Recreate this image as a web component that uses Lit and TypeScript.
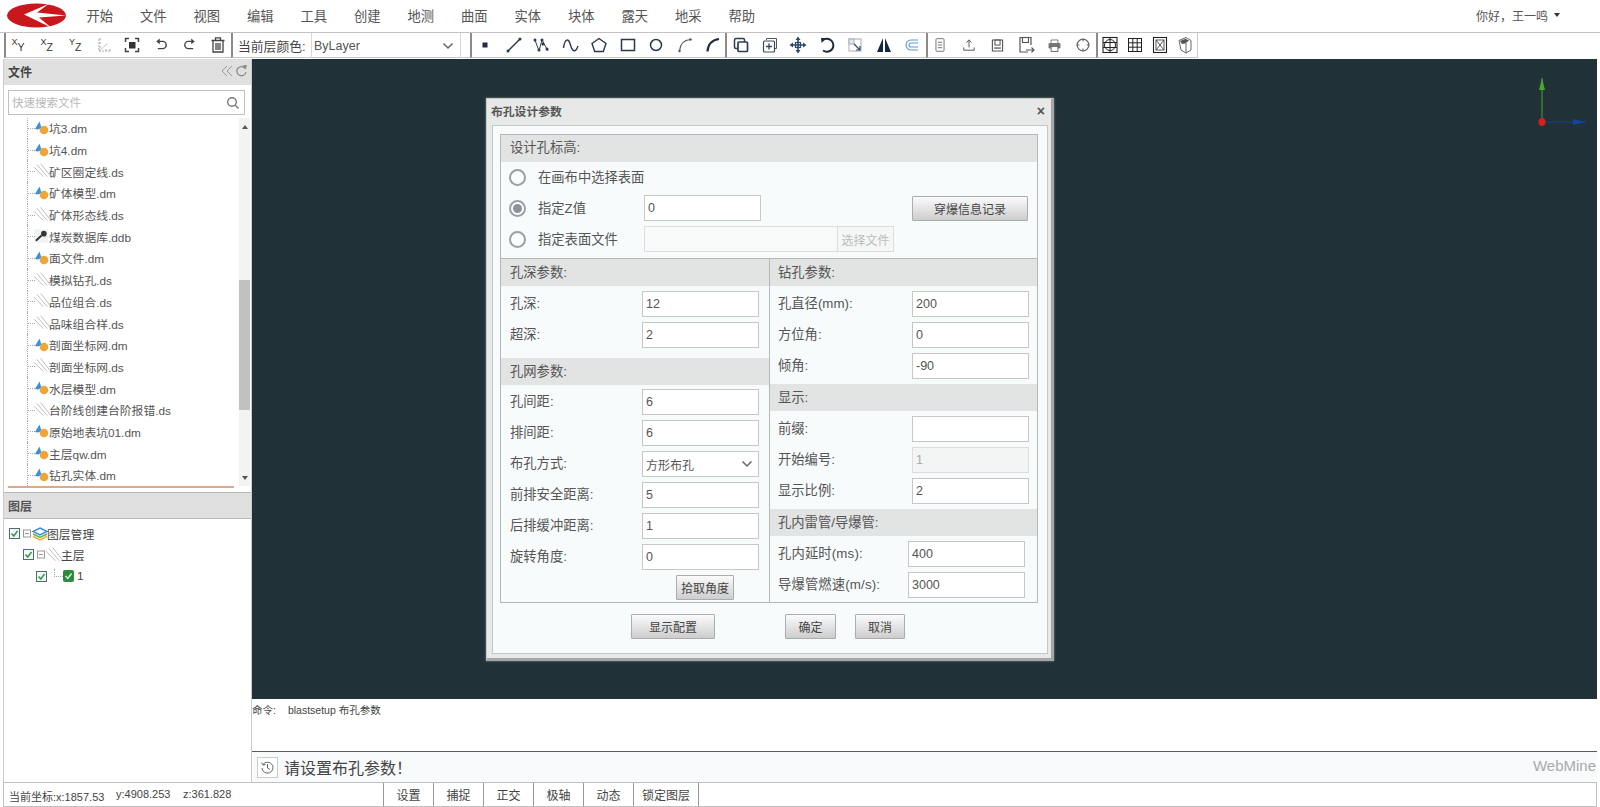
import { LitElement, html, svg, css } from "lit";
import { customElement } from "lit/decorators.js";

const ic = (body: any, size = 20) => html`<svg width=${size} height=${size} viewBox="0 0 20 20" fill="none" stroke="#444" stroke-width="1.4">${body}</svg>`;
const sx = (a: string, b: string) => html`<span class="axis"><span>${a}</span><span class="low">${b}</span></span>`;

const group1 = [
  sx("X", "Y"), sx("X", "Z"), sx("Y", "Z"),
  ic(svg`<path d="M5 4v12h11M5 16l9-8M5 4h2M5 8h2M5 12h2M16 14v3M12 14v3" stroke="#aaa" stroke-width="1" stroke-dasharray="2 1"/>`),
  ic(svg`<rect x="7" y="7" width="6.5" height="6.5" fill="#333" stroke="none"/><path d="M3.5 7V3.5H7M13 3.5h3.5V7M16.5 13v3.5H13M7 16.5H3.5V13" stroke-width="1.5"/>`),
  ic(svg`<path d="M8 5.5H12a4 4 0 0 1 0 9H6" stroke-width="1.8"/><path d="M8.5 1.8 4 5.5l4.5 3.7" fill="#444" stroke="none"/>`, 16),
  ic(svg`<path d="M12 5.5H8a4 4 0 0 0 0 9h6" stroke-width="1.8"/><path d="M11.5 1.8 16 5.5l-4.500 3.700" fill="#444" stroke="none"/>`, 16),
  ic(svg`<path d="M3.5 5.5h13M7.5 5V2.8h5V5M5 6v11h10V6M8 8v7M10 8v7M12 8v7" stroke-width="1.3"/>`),
];
const dot = (x: number, y: number) => svg`<circle cx=${x} cy=${y} r="1.5" fill="#2b3a4a" stroke="none"/>`;
const group2 = [
  ic(svg`<rect x="7.5" y="7.5" width="5" height="5" fill="#1f2d3d" stroke="none"/>`),
  ic(svg`<path d="M4 16 16 4" stroke="#2b3a4a"/>${dot(4, 16)}${dot(16, 4)}`),
  ic(svg`<path d="M3 5l4 11 3-11 6 11" stroke="#2b3a4a" stroke-width="1"/>${dot(3, 5)}${dot(7, 15)}${dot(10, 5)}${dot(11, 9)}${dot(15, 14)}`),
  ic(svg`<path d="M2.5 13C4 3 7.500 3 9.5 10s5 8 7.500 1" stroke="#2b3a4a"/>`),
  ic(svg`<path d="M10 3.500 17 8.500 14.300 16.500H5.700L3 8.500Z" stroke="#2b3a4a"/>`),
  ic(svg`<rect x="3.5" y="4.5" width="13" height="11" stroke="#2b3a4a" stroke-width="1.5"/>`),
  ic(svg`<circle cx="10" cy="10" r="5.5" stroke="#2b3a4a" stroke-width="1.5"/>`),
  ic(svg`<path d="M4.500 16C5 9 9 5 15.500 4.500" stroke="#555" stroke-width="1.1"/><circle cx="4.5" cy="16" r="1.2" fill="#555" stroke="none"/><circle cx="15.5" cy="4.5" r="1.2" fill="#555" stroke="none"/>`),
  ic(svg`<path d="M4.500 16.500C5 9 9 5 16 4" stroke="#1f2d3d" stroke-width="2.2"/>`),
];
const group3 = [
  ic(svg`<rect x="3.5" y="3.5" width="10" height="10" rx="1.5" stroke="#2a3f55" stroke-width="1.5"/><rect x="7" y="7" width="9.5" height="9.5" rx="1" fill="#fff" stroke="#2a3f55" stroke-width="1.7"/>`),
  ic(svg`<path d="M6.500 5V3.500h10v10H15" stroke="#555" stroke-width="1"/><rect x="3.5" y="6" width="11" height="11" rx="1" stroke="#3b4a5a" stroke-width="1.2"/><path d="M9 8.500v6M6 11.500h6" stroke="#3b4a5a"/>`),
  ic(svg`<path d="M10 3v14M3 10h14" stroke="#2a4a68" stroke-width="1.6"/><path d="M10 1.500 12.500 5h-5ZM10 18.500 7.500 15h5ZM1.500 10 5 7.500v5ZM18.500 10 15 12.500v-5Z" fill="#2a4a68" stroke="none"/><rect x="7.5" y="7.5" width="5" height="5" stroke="#2a4a68" stroke-width="1.2"/>`),
  ic(svg`<path d="M5.500 5.500A6.500 6.500 0 1 1 6 15.500" stroke="#1f2d3d" stroke-width="2"/><path d="M4 3h5.500L4.500 8Z" fill="#1f2d3d" stroke="none"/>`),
  ic(svg`<rect x="4" y="4" width="12" height="12" stroke="#aab" stroke-width="1"/><rect x="4" y="4" width="5" height="5" fill="#e4e6ee" stroke="#aab" stroke-width="1"/><path d="M9 9l6 6M15 11v4h-4" stroke="#2a4a68" stroke-width="1.2"/>`),
  ic(svg`<path d="M9 3 3 17h6ZM11 3 17 17h-6Z" fill="#13293f" stroke="none"/>`),
  ic(svg`<path d="M16 5H9a5 5 0 0 0 0 10h7M16 8H9a2 2 0 0 0 0 4h7" stroke="#5b9bd0" stroke-width="1.1"/>`),
];
const group4 = [
  ic(svg`<rect x="5.5" y="3" width="9" height="14" rx="1" stroke="#777" stroke-width="1.1"/><path d="M7.500 7h5M7.500 10h5M7.500 13h5" stroke="#777" stroke-width="1.1"/>`, 18),
  ic(svg`<path d="M10 13V4M7 7l3-3.500L13 7M3.500 13v3.500h13V13" stroke="#555" stroke-width="1.2"/>`, 16),
  ic(svg`<path d="M4 3.500h12V16.500H4Z" stroke="#555" stroke-width="1.3"/><rect x="7" y="3.5" width="6" height="6" stroke="#555" stroke-width="1.2"/><path d="M6 13h8" stroke="#555" stroke-width="1.5"/>`, 17),
  ic(svg`<path d="M15 10V2.500H4V17h8" stroke="#555" stroke-width="1.2"/><rect x="6.5" y="2.5" width="6" height="5" stroke="#555" stroke-width="1.1"/><path d="M10 15h8M15.500 12.500 18 15l-2.500 2.500" stroke="#555" stroke-width="1.1"/>`),
  ic(svg`<path d="M6 7V3.500h8V7" stroke="#777" stroke-width="1.1"/><rect x="3" y="7" width="14" height="6.5" rx="1.5" fill="#777" stroke="none"/><rect x="6" y="11" width="8" height="6" fill="#fff" stroke="#666" stroke-width="1.1"/>`, 17),
  ic(svg`<circle cx="10" cy="10" r="6.5" stroke="#666" stroke-width="1.4"/><path d="M10 3v3M10 14v3M3 10h3M14 10h3" stroke="#666" stroke-width="1.2"/>`, 18),
];
const group5 = [
  ic(svg`<rect x="3" y="2.5" width="14" height="15" stroke="#222" stroke-width="1.1"/><circle cx="10" cy="10" r="5.5" stroke="#222" stroke-width="1"/><path d="M3 7.500h14M3 12.500h14M10 2.500v15" stroke="#222" stroke-width="1"/>`),
  ic(svg`<rect x="3.5" y="3.5" width="13" height="13" stroke="#222" stroke-width="1"/><path d="M3.500 7.800h13M3.500 12.200h13M7.800 3.500v13M12.200 3.500v13" stroke="#222" stroke-width="1"/>`),
  ic(svg`<rect x="3.5" y="2.5" width="13" height="15" stroke="#222" stroke-width="1.1"/><rect x="6" y="5" width="8" height="10" stroke="#555" stroke-width="1"/><path d="M6 5l8 10M14 5 6 15" stroke="#555" stroke-width="1"/>`),
  ic(svg`<path d="M4 5.500 11 2.500l5 3V15l-5 3-5-3ZM11 8V18" stroke="#666" stroke-width="1"/><path d="M5 6 10.500 3.800 14 5.700 10 8.500 7 9Z" fill="#555" stroke="none"/>`),
];

const iconFile = html`<span class="fw"><svg width="16" height="16" viewBox="0 0 16 16"><path d="M1 9 5.500 1.500 7.500 8 4 9.500Z" fill="#3d8fd6"/><circle cx="10" cy="10" r="4.3" fill="#eea53a"/></svg></span>`;
const iconLines = html`<span class="fw"><svg width="17" height="16" viewBox="0 0 18 16" fill="none" stroke="#bbb" stroke-width="1"><path d="M0 4 10 14M3 1 14 14M7 0 18 14"/></svg></span>`;
const iconKey = html`<span class="fw"><svg width="15" height="16" viewBox="0 0 16 16"><rect x="0" y="1" width="15" height="14" fill="#f0f2f3"/><path d="M2 13 8 7.500" stroke="#333" stroke-width="2"/><circle cx="10.5" cy="5.5" r="3" fill="#333"/></svg></span>`;

type F = [string, "dm" | "ds" | "key"];
const files: F[] = [
  ["坑3.dm", "dm"], ["坑4.dm", "dm"], ["矿区圈定线.ds", "ds"], ["矿体模型.dm", "dm"], ["矿体形态线.ds", "ds"],
  ["煤炭数据库.ddb", "key"], ["面文件.dm", "dm"], ["模拟钻孔.ds", "ds"], ["品位组合.ds", "ds"], ["品味组合样.ds", "ds"],
  ["剖面坐标网.dm", "dm"], ["剖面坐标网.ds", "ds"], ["水层模型.dm", "dm"], ["台阶线创建台阶报错.ds", "ds"],
  ["原始地表坑01.dm", "dm"], ["主层qw.dm", "dm"], ["钻孔实体.dm", "dm"],
];
const menus = ["开始", "文件", "视图", "编辑", "工具", "创建", "地测", "曲面", "实体", "块体", "露天", "地采", "帮助"];
const chevron = html`<svg width="12" height="8" viewBox="0 0 12 8" fill="none" stroke="#666" stroke-width="1.5"><path d="M1.500 1.500 6 6l4.500-4.500"/></svg>`;
const check = html`<svg class="chk" width="11" height="11" viewBox="0 0 11 11" fill="#fff" stroke="#4f6b7a"><rect x=".5" y=".5" width="10" height="10" fill="#f4f8fa"/><path d="M2.500 5.500 4.800 8 8.500 3" stroke="#2f9a45" stroke-width="1.5" fill="none"/></svg>`;
const expander = html`<svg class="exp" width="8" height="9" viewBox="0 0 8 9" fill="none" stroke="#999"><rect x=".5" y="1" width="7" height="7"/><path d="M2 4.500h4"/></svg>`;

@customElement("app-root")
export class AppRoot extends LitElement {
  static styles = css`
    :host { display: block; width: 1600px; height: 807px; overflow: hidden; background: #fff;
      font-family: "Liberation Sans", "Noto Sans CJK SC", sans-serif; color: #555; font-size: 13px; }
    * { box-sizing: border-box; }
    .root { display: flex; flex-direction: column; height: 807px; }

    .menubar { height: 33px; flex: none; display: flex; align-items: center; padding: 0 0 2px 7px; border-bottom: 1px solid #c2c2c2; }
    .logo { flex: none; width: 59px; height: 25px; margin-right: 7px; }
    .menu { flex: none; width: 53.5px; text-align: center; font-size: 13.3px; color: #555; }
    .user { margin-left: auto; margin-right: 40px; font-size: 12px; color: #555; display: flex; align-items: center; gap: 6px; }
    .caret { width: 0; height: 0; border: 3.5px solid transparent; border-top: 4px solid #333; border-bottom: 0; }

    .toolbar { height: 26px; flex: none; display: flex; padding-left: 4px; }
    .tgroup { display: flex; align-items: center; height: 25px; border-left: 2px solid #8b8b8b; border-bottom: 1px solid #c8c8c8; }
    .g1 { gap: 4.6px; width: 227px; }
    .g2 { width: 239px; padding-left: 5px; }
    .g3 { gap: 4.5px; width: 255px; padding-left: 1px; }
    .g4 { gap: 4.5px; width: 201px; padding-left: 2px; }
    .g5 { gap: 4.5px; width: 170px; }
    .g6 { gap: 1px; width: 102px; border-right: 1px solid #c8c8c8; }
    .tb { flex: none; width: 24px; height: 24px; display: flex; align-items: center; justify-content: center; }
    .axis { display: flex; font-size: 9px; color: #333; line-height: 1; transform: translateY(-2px); }
    .axis .low { font-size: 10.5px; transform: translateY(4px); }
    .lab { flex: none; font-size: 12.8px; color: #444; width: 73px; }
    .sel { width: 150px; height: 25px; flex: none; border: 1px solid #d8d8d8; border-width: 0 1px; display: flex; align-items: center;
      justify-content: space-between; padding: 1px 6px 0 2px; font-size: 12.5px; color: #555; }

    .main { flex: 1; min-height: 0; display: flex; }
    .side { flex: none; width: 249px; margin-left: 3px; border-left: 1px solid #ccc; border-right: 1px solid #ccc; display: flex; flex-direction: column; }
    .shead { flex: none; height: 26px; background: #e0e0e0; display: flex; align-items: center; padding: 0 3px 2px 4px; font-size: 12px; font-weight: bold; color: #444; }
    .shead .acts { margin-left: auto; display: flex; align-items: center; gap: 1px; }
    .searchwrap { flex: none; height: 33px; padding: 5px 6px 0 4px; }
    .search { height: 25px; border: 1px solid #c0c0c0; display: flex; align-items: center; justify-content: space-between; padding: 0 4px 0 3px; font-size: 11.5px; color: #b8b8b8; }
    .search span { transform: translateY(-1.5px); }
    .files { flex: none; height: 368px; display: flex; overflow: hidden; }
    .tree { flex: 1; padding-left: 23px; margin-top: -1px; }
    .row { height: 21.7px; display: flex; align-items: center; position: relative; border-left: 1px dotted #aaa; padding-left: 6px; font-size: 11.8px; color: #555; white-space: nowrap; }
    .row::before { content: ""; position: absolute; left: 0; top: 50%; width: 7px; border-top: 1px dotted #aaa; }
    .fw { flex: none; width: 15px; display: flex; }
    .fw svg { flex: none; overflow: visible; }
    .scroll { flex: none; width: 11px; margin-right: 1px; background: #f3f3f3; display: flex; flex-direction: column; align-items: stretch; }
    .sarrow { flex: none; height: 17px; display: flex; align-items: center; justify-content: center; }
    .up { width: 0; height: 0; border: 3.5px solid transparent; border-bottom: 4px solid #555; border-top: 0; }
    .down { width: 0; height: 0; border: 3.5px solid transparent; border-top: 4px solid #555; border-bottom: 0; }
    .thumbgap { flex: none; height: 145px; }
    .rest { flex: 1; }
    .thumb { flex: none; height: 130px; background: #c1c1c1; }
    .rule { flex: none; height: 2px; background: #dcaa84; margin: 0 17px 0 4px; }
    .lhead { flex: none; height: 27px; margin-top: 4px; border-top: 1px solid #b9b9b9; border-bottom: 1px solid #b9b9b9; background: #e0e0e0; display: flex; align-items: center; padding-left: 4px; font-size: 12px; color: #555; font-weight: bold; }
    .ltree { flex: 1; padding-top: 4px; }
    .lrow { height: 21.3px; display: flex; align-items: center; font-size: 11.8px; color: #444; }
    .l0 { padding-left: 5px; } .l1 { padding-left: 19px; } .l2 { padding-left: 32px; }
    .chk { flex: none; margin-right: 3px; }
    .exp { flex: none; margin-right: 1px; }
    .dash { flex: none; width: 9px; height: 8px; margin: 0 0 6px 4px; border-left: 1px dotted #aaa; border-bottom: 1px dotted #aaa; }
    .greenbox { flex: none; width: 11px; height: 12px; margin-right: 3px; }

    .work { flex: 1; min-width: 0; display: flex; flex-direction: column; padding-right: 3px; }
    .canvas { flex: none; height: 640px; background: #203237; position: relative; }
    .gizmo { position: absolute; right: 10px; top: 14px; }
    .cmd { flex: none; height: 53px; border-bottom: 1px solid #5c5c5c; padding-top: 5px; font-size: 10.5px; color: #444; display: flex; gap: 12px; line-height: 13px; }
    .prompt { flex: 1; background: #f8fafb; display: flex; align-items: center; padding: 0 1px 0 5px; font-size: 16px; color: #444; }
    .hist { flex: none; width: 21px; height: 21px; border: 1px solid #ccc; background: #fff; display: flex; align-items: center; justify-content: center; margin-right: 6px; }
    .brand { margin-left: auto; font-size: 15px; color: #aaa; margin-top: -3px; }

    .status { flex: none; height: 25px; margin: 0 3px; border: 1px solid #c0c0c0; display: flex; align-items: center; font-size: 12px; color: #444; padding-left: 5px; }
    .coords { flex: none; width: 374px; display: flex; font-size: 11px; padding-top: 2px; }
    .c1 { width: 107px; } .c2 { width: 67px; }
    .sbtn { flex: none; width: 50px; height: 100%; border-left: 1px solid #999; display: flex; align-items: center; justify-content: center; }
    .sbtn.wide { width: 66px; border-right: 1px solid #999; }

    .dlg { position: absolute; left: 234px; top: 39px; width: 568px; height: 563px; background: #e7e8e8; border: 1px solid #c8c8c8; border-right: 3px solid #a6a6a6; border-bottom: 3px solid #a6a6a6; display: flex; flex-direction: column; padding: 0 3px 4px 5px; box-shadow: 0 0 2px #8a8a8a; }
    .dtitle { flex: none; height: 26px; display: flex; align-items: center; justify-content: space-between; padding: 0 3px 3px 0; margin-left: -1px; font-size: 11.8px; font-weight: bold; color: #555; }
    .x { font-size: 14px; color: #555; font-weight: bold; line-height: 1; }
    .dbody { flex: 1; background: #f8fbfc; border: 1px solid #c4c7c8; padding: 8px 9px 0 7px; display: flex; flex-direction: column; }
    .fs { flex: none; height: 469px; border: 1px solid #b6b8b8; display: flex; flex-direction: column; }
    .hd { flex: none; height: 27px; background: #e2e3e3; display: flex; align-items: center; padding: 0 0 2px 9px; font-size: 13.3px; color: #555; }
    .fs > .hd { padding-bottom: 4px; }
    .top { flex: none; height: 97px; border-bottom: 1px solid #b6b8b8; padding-top: 2px; }
    .trow { height: 26px; margin-bottom: 5px; display: flex; align-items: center; padding-left: 8px; font-size: 13.3px; color: #555; }
    .radio { flex: none; width: 17px; height: 17px; border-radius: 50%; border: 2px solid #9aa0a3; background: #fcfdfd; margin-right: 12px; display: flex; align-items: center; justify-content: center; }
    .radio.on::after { content: ""; width: 9px; height: 9px; border-radius: 50%; background: #8e929c; }
    .tl { transform: translateY(-1.5px); }
    .tlabel { flex: none; width: 106px; transform: translateY(-1.5px); }
    .in { display: flex; align-items: center; flex: none; width: 117px; height: 26px; border: 1px solid #c6c8c8; background: #fff; font: 12.5px "Liberation Sans", "Noto Sans CJK SC", sans-serif; color: #555; padding: 0 3px; }
    .in.off { background: #f3f5f5; border-color: #dcdede; color: #aaa; }
    .in.dd { justify-content: space-between; padding-right: 5px; font-size: 12px; }
    .btn { flex: none; display: flex; align-items: center; justify-content: center; height: 25px; border: 1px solid #a9adad; background: linear-gradient(#fbfbfb, #cdcdcd); font-size: 12px; color: #444; border-radius: 1px; }
    .btn.big { width: 116px; margin-left: 151px; }
    .file { flex: none; width: 250px; height: 26px; border: 1px solid #dcdede; display: flex; justify-content: flex-end; background: #f8fafa; }
    .filebtn { width: 56px; border-left: 1px solid #dcdede; display: flex; align-items: center; justify-content: center; font-size: 12px; color: #bbb; background: #f5f6f6; }
    .cols { flex: 1; display: flex; min-height: 0; }
    .col { display: flex; flex-direction: column; }
    .left { flex: none; width: 269px; border-right: 1px solid #b6b8b8; }
    .right { flex: 1; }
    .right .hd { padding-left: 8px; }
    .sec { display: flex; flex-direction: column; gap: 5px; padding-left: 9px; }
    .right .sec { padding-left: 8px; }
    .s1 { padding-top: 5px; height: 72px; }
    .s2 { padding-top: 4px; }
    .r1 { padding-top: 5px; height: 98px; }
    .r2 { padding-top: 5px; height: 98px; }
    .r3 { padding-top: 5px; }
    .f { height: 26px; display: flex; align-items: center; font-size: 13.3px; color: #555; }
    .fl { flex: none; width: 134px; transform: translateY(-2px); white-space: nowrap; }
    .left .fl { width: 132px; }
    .r3 .fl { width: 130px; letter-spacing: 0.15px; }
    .pick { width: 58px; margin-left: 166px; }
    .foot { flex: 1; display: flex; padding-top: 11px; }
    .foot .b1 { width: 84px; margin-left: 131px; }
    .foot .b2 { width: 51px; margin-left: 70px; }
    .foot .b3 { width: 50px; margin-left: 19px; }
  `;

  field(label: string, value = "", off = false) {
    return html`<div class="f"><span class="fl">${label}</span><div class="in ${off ? "off" : ""}">${value}</div></div>`;
  }

  render() {
    const fileIcon = (k: string) => (k === "dm" ? iconFile : k === "ds" ? iconLines : iconKey);
    return html`<div class="root">
      <div class="menubar">
        <svg class="logo" viewBox="0 0 59 25"><ellipse cx="29.5" cy="12.5" rx="29.5" ry="12" fill="#c8171d"/><path d="M17 11.500 42 .8 30 9.500 59 12.500 32 14.500 44 24.500Z" fill="#fff"/></svg>
        ${menus.map((m) => html`<div class="menu">${m}</div>`)}
        <div class="user"><span>你好，王一鸣</span><span class="caret"></span></div>
      </div>
      <div class="toolbar">
        <div class="tgroup g1">${group1.map((i) => html`<div class="tb">${i}</div>`)}</div>
        <div class="tgroup g2"><span class="lab">当前层颜色:</span><div class="sel"><span>ByLayer</span>${chevron}</div></div>
        <div class="tgroup g3">${group2.map((i) => html`<div class="tb">${i}</div>`)}</div>
        <div class="tgroup g4">${group3.map((i) => html`<div class="tb">${i}</div>`)}</div>
        <div class="tgroup g5">${group4.map((i) => html`<div class="tb">${i}</div>`)}</div>
        <div class="tgroup g6">${group5.map((i) => html`<div class="tb">${i}</div>`)}</div>
      </div>
      <div class="main">
        <div class="side">
          <div class="shead"><span>文件</span><div class="acts">
            <svg width="14" height="14" viewBox="0 0 14 14" fill="none" stroke="#999" stroke-width="1"><path d="M7 2 2 7l5 5M12 2 7 7l5 5"/></svg>
            <svg width="13" height="14" viewBox="0 0 13 14" fill="none" stroke="#888" stroke-width="1.2"><path d="M10.500 5A4.600 4.600 0 1 0 11 8"/><path d="M7.500 1.500 11 5l1-4Z" fill="#888" stroke="none"/></svg>
          </div></div>
          <div class="searchwrap"><div class="search"><span>快速搜索文件</span>
            <svg width="14" height="14" viewBox="0 0 14 14" fill="none" stroke="#777" stroke-width="1.4"><circle cx="6" cy="6" r="4.3"/><path d="M9.200 9.200 12.500 12.500"/></svg></div></div>
          <div class="files">
            <div class="tree">${files.map(([n, k]) => html`<div class="row">${fileIcon(k)}<span>${n}</span></div>`)}</div>
            <div class="scroll">
              <div class="sarrow"><span class="up"></span></div>
              <div class="thumbgap"></div><div class="thumb"></div>
              <div class="rest"></div>
              <div class="sarrow"><span class="down"></span></div>
            </div>
          </div>
          <div class="rule"></div>
          <div class="lhead">图层</div>
          <div class="ltree">
            <div class="lrow l0">${check}${expander}
              <span class="fw"><svg width="16" height="16" viewBox="0 0 16 16" fill="none"><path d="M1 10.500 8 14l7-3.500" stroke="#e0b23a" stroke-width="1.5"/><path d="M1 8 8 11.500 15 8" stroke="#64b04a" stroke-width="1.5"/><path d="M8 2 15 5.500 8 9 1 5.500Z" stroke="#3d8fd6" stroke-width="1.5"/></svg></span>
              <span>图层管理</span></div>
            <div class="lrow l1">${check}${expander}${iconLines}<span>主层</span></div>
            <div class="lrow l2">${check}<span class="dash"></span>
              <svg class="greenbox" viewBox="0 0 11 12"><rect width="11" height="12" rx="2" fill="#2e8b3d"/><path d="M2.500 6 4.800 8.500 8.500 3.500" stroke="#d8f0d8" stroke-width="1.4" fill="none"/></svg>
              <span>1</span></div>
          </div>
        </div>
        <div class="work">
          <div class="canvas">
            <svg class="gizmo" width="60" height="60" viewBox="0 0 60 60" fill="none">
              <path d="M15 5v44" stroke="#4e9f2e" stroke-width="1"/><path d="M15 5 18 17H12Z" fill="#4ea32c"/>
              <path d="M15 49h44" stroke="#14408c" stroke-width="1"/><path d="M59 49 46 52V46Z" fill="#14439c"/>
              <ellipse cx="15" cy="49" rx="3.5" ry="4" fill="#d81e1e"/>
            </svg>
            <div class="dlg">
              <div class="dtitle"><span>布孔设计参数</span><span class="x">×</span></div>
              <div class="dbody">
                <div class="fs">
                  <div class="hd">设计孔标高:</div>
                  <div class="top">
                    <div class="trow"><span class="radio"></span><span class="tl">在画布中选择表面</span></div>
                    <div class="trow"><span class="radio on"></span><span class="tlabel">指定Z值</span><div class="in">0</div><div class="btn big">穿爆信息记录</div></div>
                    <div class="trow"><span class="radio"></span><span class="tlabel">指定表面文件</span><div class="file"><div class="filebtn">选择文件</div></div></div>
                  </div>
                  <div class="cols">
                    <div class="col left">
                      <div class="hd">孔深参数:</div>
                      <div class="sec s1">${this.field("孔深:", "12")}${this.field("超深:", "2")}</div>
                      <div class="hd">孔网参数:</div>
                      <div class="sec s2">
                        ${this.field("孔间距:", "6")}${this.field("排间距:", "6")}
                        <div class="f"><span class="fl">布孔方式:</span><div class="in dd"><span>方形布孔</span>${chevron}</div></div>
                        ${this.field("前排安全距离:", "5")}${this.field("后排缓冲距离:", "1")}${this.field("旋转角度:", "0")}
                        <div class="btn pick">拾取角度</div>
                      </div>
                    </div>
                    <div class="col right">
                      <div class="hd">钻孔参数:</div>
                      <div class="sec r1">${this.field("孔直径(mm):", "200")}${this.field("方位角:", "0")}${this.field("倾角:", "-90")}</div>
                      <div class="hd">显示:</div>
                      <div class="sec r2">${this.field("前缀:", "")}${this.field("开始编号:", "1", true)}${this.field("显示比例:", "2")}</div>
                      <div class="hd">孔内雷管/导爆管:</div>
                      <div class="sec r3">${this.field("孔内延时(ms):", "400")}${this.field("导爆管燃速(m/s):", "3000")}</div>
                    </div>
                  </div>
                </div>
                <div class="foot">
                  <div class="btn b1">显示配置</div><div class="btn b2">确定</div><div class="btn b3">取消</div>
                </div>
              </div>
            </div>
          </div>
          <div class="cmd"><span>命令:</span><span>blastsetup 布孔参数</span></div>
          <div class="prompt">
            <div class="hist"><svg width="15" height="15" viewBox="0 0 15 15" fill="none" stroke="#666" stroke-width="1"><path d="M3 4.500A5.500 5.500 0 1 1 2 8"/><path d="M1.500 2.500 3 5l2.500-.5M7.500 4v4l2.500 1.500"/></svg></div>
            <span>请设置布孔参数！</span><span class="brand">WebMine</span>
          </div>
        </div>
      </div>
      <div class="status">
        <div class="coords"><span class="c1">当前坐标:x:1857.53</span><span class="c2">y:4908.253</span><span>z:361.828</span></div>
        ${["设置", "捕捉", "正交", "极轴", "动态"].map((s) => html`<div class="sbtn">${s}</div>`)}
        <div class="sbtn wide">锁定图层</div>
      </div>
    </div>`;
  }
}
